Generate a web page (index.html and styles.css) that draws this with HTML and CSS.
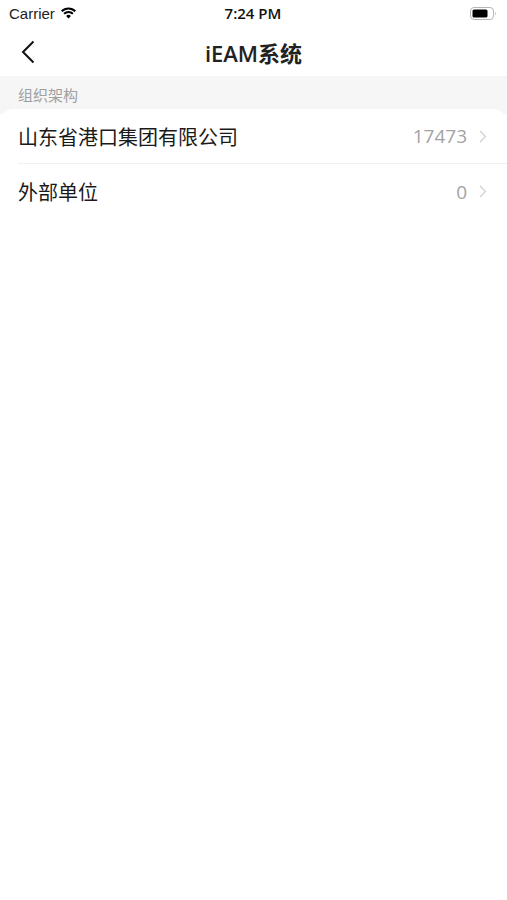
FILE: index.html
```html
<!DOCTYPE html>
<html lang="zh-CN">
<head>
  <meta charset="UTF-8" />
  <meta name="viewport" content="width=device-width, initial-scale=1.0" />
  <title>iEAM系统</title>
  <link rel="stylesheet" href="styles.css">
</head>
<body>
  <div class="status-bar">
    <div class="status-left">
      <span>Carrier</span>
      <svg class="wifi" width="17" height="12" viewBox="0 0 16 12">
        <path d="M8 11.5 L5.6 8.9 A3.4 3.4 0 0 1 10.4 8.9 Z" fill="#000"/>
        <path d="M3.6 6.8 A6.2 6.2 0 0 1 12.4 6.8" stroke="#000" stroke-width="2" fill="none"/>
        <path d="M1.2 4.2 A9.6 9.6 0 0 1 14.8 4.2" stroke="#000" stroke-width="2" fill="none"/>
      </svg>
    </div>
    <div class="status-time">7:24 PM</div>
    <div class="status-right">
      <svg width="27" height="13" viewBox="0 0 27 13">
        <rect x="0.5" y="0.5" width="23" height="12" rx="3.5" fill="none" stroke="#b5b5b5"/>
        <rect x="2.5" y="2.5" width="15" height="8" rx="1.5" fill="#000"/>
        <path d="M25 4.5 Q26.5 6.5 25 8.5 Z" fill="#b5b5b5"/>
      </svg>
    </div>
  </div>

  <div class="nav-bar">
    <svg class="back" width="14" height="24" viewBox="0 0 14 24">
      <path d="M12.5 1.5 L2 12 L12.5 22.5" stroke="#111" stroke-width="2" fill="none"/>
    </svg>
    <div class="nav-title">iEAM系统</div>
  </div>

  <div class="section">
    <div class="section-label">组织架构</div>
  </div>

  <div class="card">
    <div class="row">
      <span class="row-name">山东省港口集团有限公司</span>
      <span class="row-count">17473</span>
      <svg class="chevron" width="8" height="13" viewBox="0 0 8 13">
        <path d="M1 1 L6.5 6.5 L1 12" stroke="#cfcfcf" stroke-width="1.2" fill="none"/>
      </svg>
    </div>
    <div class="row">
      <span class="row-name">外部单位</span>
      <span class="row-count">0</span>
      <svg class="chevron" width="8" height="13" viewBox="0 0 8 13">
        <path d="M1 1 L6.5 6.5 L1 12" stroke="#cfcfcf" stroke-width="1.2" fill="none"/>
      </svg>
    </div>
  </div>
</body>
</html>
```

FILE: styles.css
```css
* {
  margin: 0;
  padding: 0;
  box-sizing: border-box;
}

body {
  width: 507px;
  min-height: 900px;
  background-color: #fff;
  font-family: "Open Sans", "Noto Sans CJK SC", sans-serif;
  color: #111;
}

.status-bar {
  height: 28px;
  display: flex;
  align-items: center;
  justify-content: space-between;
  padding: 0 10px 2px 9px;
  font-size: 15px;
}

.status-left {
  display: flex;
  align-items: center;
  gap: 5px;
  width: 120px;
  color: #222;
  font-family: "Liberation Sans", sans-serif;
}

.status-time {
  font-weight: 600;
  font-size: 15px;
}

.status-right {
  width: 120px;
  display: flex;
  justify-content: flex-end;
}

.nav-bar {
  height: 48px;
  display: flex;
  align-items: center;
  justify-content: center;
  position: relative;
}

.back {
  position: absolute;
  left: 21px;
  top: 12px;
}

.nav-title {
  font-size: 22px;
  font-weight: 600;
  color: #222;
}

.section {
  background-color: #f6f6f6;
  height: 38px;
  padding: 8px 18px 0;
}

.section-label {
  font-size: 15px;
  color: #a0a0a0;
}

.card {
  background-color: #fff;
  border-radius: 14px 14px 0 0;
  margin-top: -5px;
}

.row {
  height: 55px;
  display: flex;
  align-items: center;
  margin-left: 18px;
  padding-right: 20px;
  border-bottom: 1px solid #f0f0f0;
}

.row:last-child {
  border-bottom: none;
}

.row-name {
  flex: 1;
  font-size: 20px;
  color: #1a1a1a;
}

.row-count {
  font-size: 19px;
  color: #a3a3a3;
  margin-right: 12px;
}

.chevron {
  display: block;
}
```
